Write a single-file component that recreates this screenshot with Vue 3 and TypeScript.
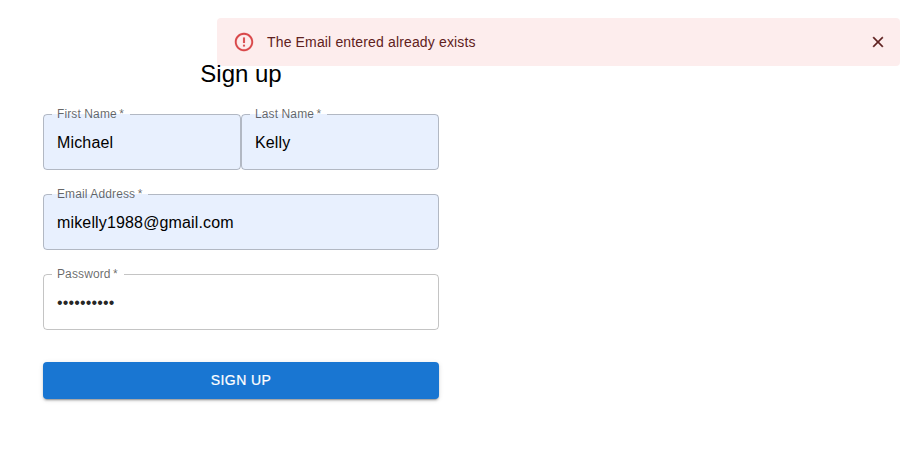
<script setup lang="ts">
import { reactive, ref } from 'vue'

interface Field {
  id: string
  label: string
  type: string
  value: string
  half: boolean
  autofilled: boolean
}

const alertOpen = ref(true)
const fields = reactive<Field[]>([
  { id: 'firstName', label: 'First Name', type: 'text', value: 'Michael', half: true, autofilled: true },
  { id: 'lastName', label: 'Last Name', type: 'text', value: 'Kelly', half: true, autofilled: true },
  { id: 'email', label: 'Email Address', type: 'text', value: 'mikelly1988@gmail.com', half: false, autofilled: true },
  { id: 'password', label: 'Password', type: 'password', value: 'abcdefghij', half: false, autofilled: false },
])
</script>

<template>
  <main class="page">
    <div v-if="alertOpen" class="alert" role="alert">
      <svg class="alert-icon" viewBox="0 0 24 24" aria-hidden="true">
        <path d="M11 15h2v2h-2zm0-8h2v6h-2zm.99-5C6.47 2 2 6.48 2 12s4.47 10 9.99 10C17.52 22 22 17.52 22 12S17.52 2 11.99 2zM12 20c-4.42 0-8-3.58-8-8s3.58-8 8-8 8 3.58 8 8-3.58 8-8 8z" />
      </svg>
      <span class="alert-text">The Email entered already exists</span>
      <button class="alert-close" type="button" aria-label="Close" @click="alertOpen = false">
        <svg viewBox="0 0 24 24" aria-hidden="true">
          <path d="M19 6.41L17.59 5 12 10.59 6.41 5 5 6.41 10.59 12 5 17.59 6.41 19 12 13.41 17.59 19 19 17.59 13.41 12z" />
        </svg>
      </button>
    </div>

    <section class="panel">
      <h1 class="title">Sign up</h1>
      <form class="form" @submit.prevent>
        <div class="fields">
          <div v-for="f in fields" :key="f.id" class="field" :class="{ half: f.half, autofilled: f.autofilled }">
            <input :id="f.id" v-model="f.value" class="input" :type="f.type" autocomplete="off" spellcheck="false" />
            <label class="label" :for="f.id">{{ f.label }}&thinsp;*</label>
            <fieldset class="outline" aria-hidden="true">
              <legend class="notch">{{ f.label }}&nbsp;*</legend>
            </fieldset>
          </div>
        </div>
        <button class="submit" type="submit">Sign Up</button>
      </form>
    </section>
  </main>
</template>

<style>
body {
  background: #fff;
}
</style>

<style scoped>
.page {
  box-sizing: border-box;
  min-height: 462px;
  padding: 58px 43px 0;
  font-family: "Liberation Sans", Arial, sans-serif;
  color: rgba(0, 0, 0, 0.87);
}
.page * {
  box-sizing: border-box;
}
.alert {
  position: absolute;
  top: 18px;
  right: 8px;
  width: 683px;
  height: 48px;
  padding: 0 16px;
  display: flex;
  align-items: center;
  border-radius: 4px;
  background: #fdeded;
  color: #5f2120;
}
.alert-icon {
  width: 22px;
  height: 22px;
  margin-right: 12px;
  fill: #d9484a;
  stroke: #d9484a;
  stroke-width: 0.15;
}
.alert-text {
  flex: 1;
  font-size: 14px;
  line-height: 20px;
  letter-spacing: 0.01071em;
}
.alert-close {
  display: flex;
  margin-right: -8px;
  padding: 5px;
  border: 0;
  background: none;
  color: inherit;
}
.alert-close svg {
  width: 18px;
  height: 18px;
  fill: currentColor;
  stroke: currentColor;
  stroke-width: 0.4;
}
.panel {
  position: relative;
  width: 396px;
}
.title {
  margin: 0;
  font-size: 24px;
  font-weight: 400;
  line-height: 32px;
  text-align: center;
  color: #000;
}
.form {
  margin-top: 24px;
}
.fields {
  display: flex;
  flex-wrap: wrap;
  row-gap: 24px;
}
.field {
  position: relative;
  width: 100%;
  height: 56px;
  border-radius: 4px;
}
.field.half {
  width: 50%;
}
.input {
  display: block;
  width: 100%;
  height: 56px;
  margin: 0;
  padding: 17px 14px 16px;
  border: 0;
  border-radius: 4px;
  outline: 0;
  background: transparent;
  font: 16px/23px "Liberation Sans", Arial, sans-serif;
  letter-spacing: 0.00938em;
  color: rgba(0, 0, 0, 0.87);
}
.autofilled .input {
  background: #e8f0fe;
  color: #000;
}
.label {
  position: absolute;
  top: -8px;
  left: 14px;
  font-size: 12px;
  line-height: 17px;
  letter-spacing: 0.00938em;
  white-space: nowrap;
  color: rgba(0, 0, 0, 0.6);
}
.outline {
  position: absolute;
  inset: -5px 0 0;
  min-width: 0;
  margin: 0;
  padding: 0 8px;
  border: 1px solid rgba(0, 0, 0, 0.23);
  border-radius: 4px;
  pointer-events: none;
}
.notch {
  height: 11px;
  padding: 0 5px;
  font-size: 12px;
  line-height: 11px;
  letter-spacing: 0.0075em;
  white-space: nowrap;
  visibility: hidden;
}
.submit {
  display: block;
  width: 100%;
  height: 36.5px;
  margin-top: 32px;
  padding: 6px 16px;
  border: 0;
  border-radius: 4px;
  background: #1976d2;
  box-shadow: 0 3px 1px -2px rgba(0, 0, 0, 0.2), 0 2px 2px 0 rgba(0, 0, 0, 0.14), 0 1px 5px 0 rgba(0, 0, 0, 0.12);
  color: #fff;
  font: 14px/24.5px "Liberation Sans", Arial, sans-serif;
  letter-spacing: 0.02857em;
  text-transform: uppercase;
  -webkit-text-stroke: 0.2px #fff;
}
</style>
